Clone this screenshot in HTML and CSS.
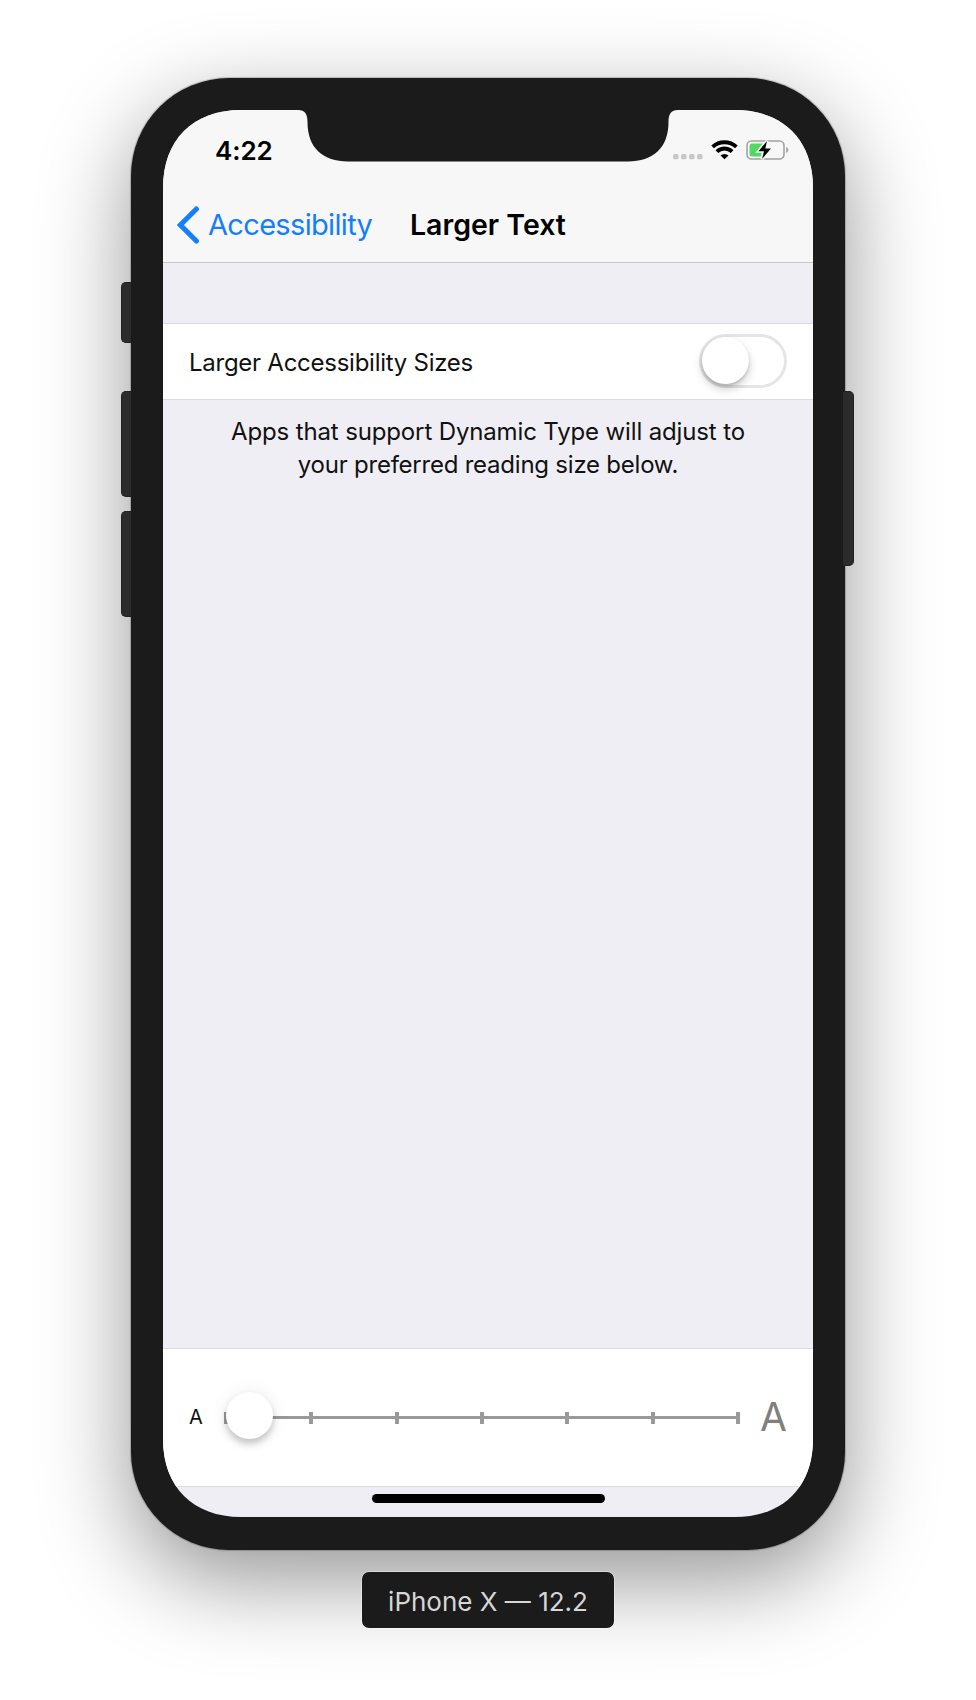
FILE: index.html
```html
<!DOCTYPE html>
<html lang="en">
<head>
<meta charset="utf-8">
<title>Larger Text</title>
<link rel="stylesheet" href="styles.css">
</head>
<body>
<main class="stage">
  <div class="phone">
    <i class="key key-mute"></i>
    <i class="key key-up"></i>
    <i class="key key-down"></i>
    <i class="key key-power"></i>
    <div class="bezel">
      <div class="screen">
        <svg class="notch" width="380" height="52" viewBox="0 0 380 52"><path d="M0-1H380V0C373 0 370.500 4 370.500 12C370.500 38 355 51.500 330 51.500H50C25 51.500 9.500 38 9.500 12C9.500 4 7 0 0 0Z" fill="#1b1b1b"/></svg>
        <header class="header">
          <div class="status">
            <span class="clock">4:22</span>
            <div class="indicators">
              <svg width="116" height="20" viewBox="0 0 116 20">
                <g fill="#c8c8c8"><rect x="0" y="14" width="5.500" height="5.200" rx="1.500"/><rect x="8" y="14" width="5.500" height="5.200" rx="1.500"/><rect x="16" y="14" width="5.500" height="5.200" rx="1.500"/><rect x="24" y="14" width="5.500" height="5.200" rx="1.500"/></g>
                <g fill="none" stroke="#000" stroke-width="3.900"><path d="M39.600 6.900A17.500 17.500 0 0 1 63.400 6.900"/><path d="M43.900 11.600A11 11 0 0 1 59.100 11.600"/></g>
                <path d="M47.500 15.600A5.800 5.800 0 0 1 55.500 15.600L51.500 19.300Z"/>
                <rect x="74" y="1" width="37" height="18" rx="4.500" fill="none" stroke="#a3a3a3" stroke-width="1.600"/>
                <path d="M113.200 7C116 8 116 12 113.200 13Z" fill="#a3a3a3"/>
                <path d="M79 3.500H90L84 11.500H89L88 16.500H79Q76.500 16.500 76.500 14V6Q76.500 3.500 79 3.500Z" fill="#53d769"/>
                <path d="M94 1L85.500 11.200H91L89 19L98 8.500H92.300Z" stroke="#f7f7f7" stroke-width="3" paint-order="stroke"/>
              </svg>
            </div>
          </div>
          <nav class="nav">
            <a class="back"><svg width="22" height="38" viewBox="0 0 22 38"><path d="M19.400 3L3.400 19L19.400 35" fill="none" stroke="#147efb" stroke-width="5" stroke-linecap="round"/></svg><span class="back-text">Accessibility</span></a>
            <h1 class="title">Larger Text</h1>
          </nav>
        </header>
        <section class="row">
          <span class="row-label">Larger Accessibility Sizes</span>
          <span class="switch"><i class="switch-knob"></i></span>
        </section>
        <p class="note"><span class="line-a">Apps that support Dynamic Type will adjust to</span><br><span class="line-b">your preferred reading size below.</span></p>
        <section class="sizes">
          <span class="small-a">A</span>
          <div class="track"><i class="tick"></i><i class="tick"></i><i class="tick"></i><i class="tick"></i><i class="tick"></i><i class="tick"></i><i class="tick"></i><i class="thumb"></i></div>
          <span class="large-a">A</span>
        </section>
        <footer class="home"><i class="home-bar"></i></footer>
      </div>
    </div>
  </div>
  <div class="caption"><span class="caption-text">iPhone X — 12.2</span></div>
</main>
</body>
</html>
```
FILE: styles.css
```css
* { box-sizing: border-box; }
body { margin: 0; background: #fff; font-family: Inter, "Liberation Sans", sans-serif; color: #111; }
i { display: block; }
span { white-space: nowrap; }
.stage { width: 976px; height: 1700px; padding-top: 78px; display: flex; flex-direction: column; align-items: center; gap: 22px; overflow: hidden; }
.phone { position: relative; width: 714px; height: 1472px; }
.bezel { position: relative; height: 1472px; padding: 32px 32px 33px; border-radius: 98px; background: #1b1b1b; box-shadow: 0 0 1px 1px rgba(0,0,0,.2), 0 30px 90px rgba(0,0,0,.42); }
.key { position: absolute; z-index: 1; background: #2b2b2b; border: 1px solid #202020; border-right: 0; border-radius: 5px 0 0 5px; }
.key-mute { left: -10px; top: 204px; width: 10px; height: 61px; }
.key-up { left: -10px; top: 313px; width: 10px; height: 106px; }
.key-down { left: -10px; top: 433px; width: 10px; height: 106px; }
.key-power { right: -9px; top: 313px; width: 11px; height: 175px; border-radius: 0 5px 5px 0; border-left: 0; border-right: 1px solid #202020; }
.screen { position: relative; width: 650px; height: 1407px; display: flex; flex-direction: column; background: #efeef4; clip-path: path("M0 78C0 30 30 0 78 0H572C620 0 650 30 650 78V1329C650 1377 620 1407 572 1407H78C30 1407 0 1377 0 1329Z"); }
.notch { position: absolute; left: 135px; top: 0; }
.header { height: 153px; background: #f7f7f7; border-bottom: 1px solid #c8c7cc; }
.status { height: 78px; padding: 25px 24px 0 52px; display: flex; justify-content: space-between; }
.clock { font-size: 26px; line-height: 31px; font-weight: 600; letter-spacing: -.1px; color: #000; }
.indicators { padding-top: 5px; }
.nav { height: 74px; display: flex; align-items: center; }
.back { display: flex; align-items: center; width: 247px; padding-left: 14px; gap: 9px; color: #147efb; }
.back-text { padding-bottom: 2px; font-size: 29px; letter-spacing: -.67px; }
.title { margin: 0; padding-bottom: 2px; font-size: 28.500px; font-weight: 600; color: #000; white-space: nowrap; }
.row { margin-top: 60px; height: 77px; display: flex; justify-content: space-between; align-items: center; padding: 0 26px 1px 26px; background: #fff; border-top: 1px solid #dcdbe0; border-bottom: 1px solid #dcdbe0; }
.row-label { padding-top: 2px; font-size: 24px; letter-spacing: -.26px; }
.switch { width: 88px; height: 54px; border: 3.500px solid #e5e5e5; border-radius: 27px; }
.switch-knob { width: 47px; height: 47px; border-radius: 50%; background: #fff; box-shadow: 0 5px 10px rgba(0,0,0,.2), 0 2px 3px rgba(0,0,0,.15); }
.note { margin: 15px 0 0; font-size: 24px; line-height: 33px; text-align: center; }
.line-a { letter-spacing: -.14px; }
.line-b { letter-spacing: -.23px; }
.sizes { margin-top: auto; height: 139px; display: flex; align-items: center; background: #fff; border-top: 1px solid #dcdbe0; border-bottom: 1px solid #dcdbe0; padding: 0 26px; }
.small-a { width: 35px; padding-bottom: 2px; font-size: 20px; }
.track { position: relative; width: 516px; height: 12px; display: flex; justify-content: space-between; background: linear-gradient(#999,#999) 0 4px / 100% 3px no-repeat; }
.tick { width: 4px; height: 12px; background: #999; }
.thumb { position: absolute; left: 2px; top: -20px; width: 47px; height: 47px; border-radius: 50%; background: #fff; box-shadow: 0 5px 7px rgba(0,0,0,.2), 0 0 18px rgba(0,0,0,.08); }
.large-a { margin-left: 20px; padding-bottom: 2px; font-size: 39px; color: #808080; -webkit-text-stroke: 0; }
.home { height: 30px; display: flex; justify-content: center; padding-top: 7px; }
.home-bar { width: 233px; height: 9px; border-radius: 5px; background: #000; }
.caption { position: relative; width: 252px; height: 56px; display: flex; justify-content: center; align-items: center; border-radius: 7px; background: #1b1b1b; color: #d6d6d6; font-size: 26px; box-shadow: 0 0 0 1px rgba(255,255,255,.35); }
.caption-text { padding-top: 2px; }
```
